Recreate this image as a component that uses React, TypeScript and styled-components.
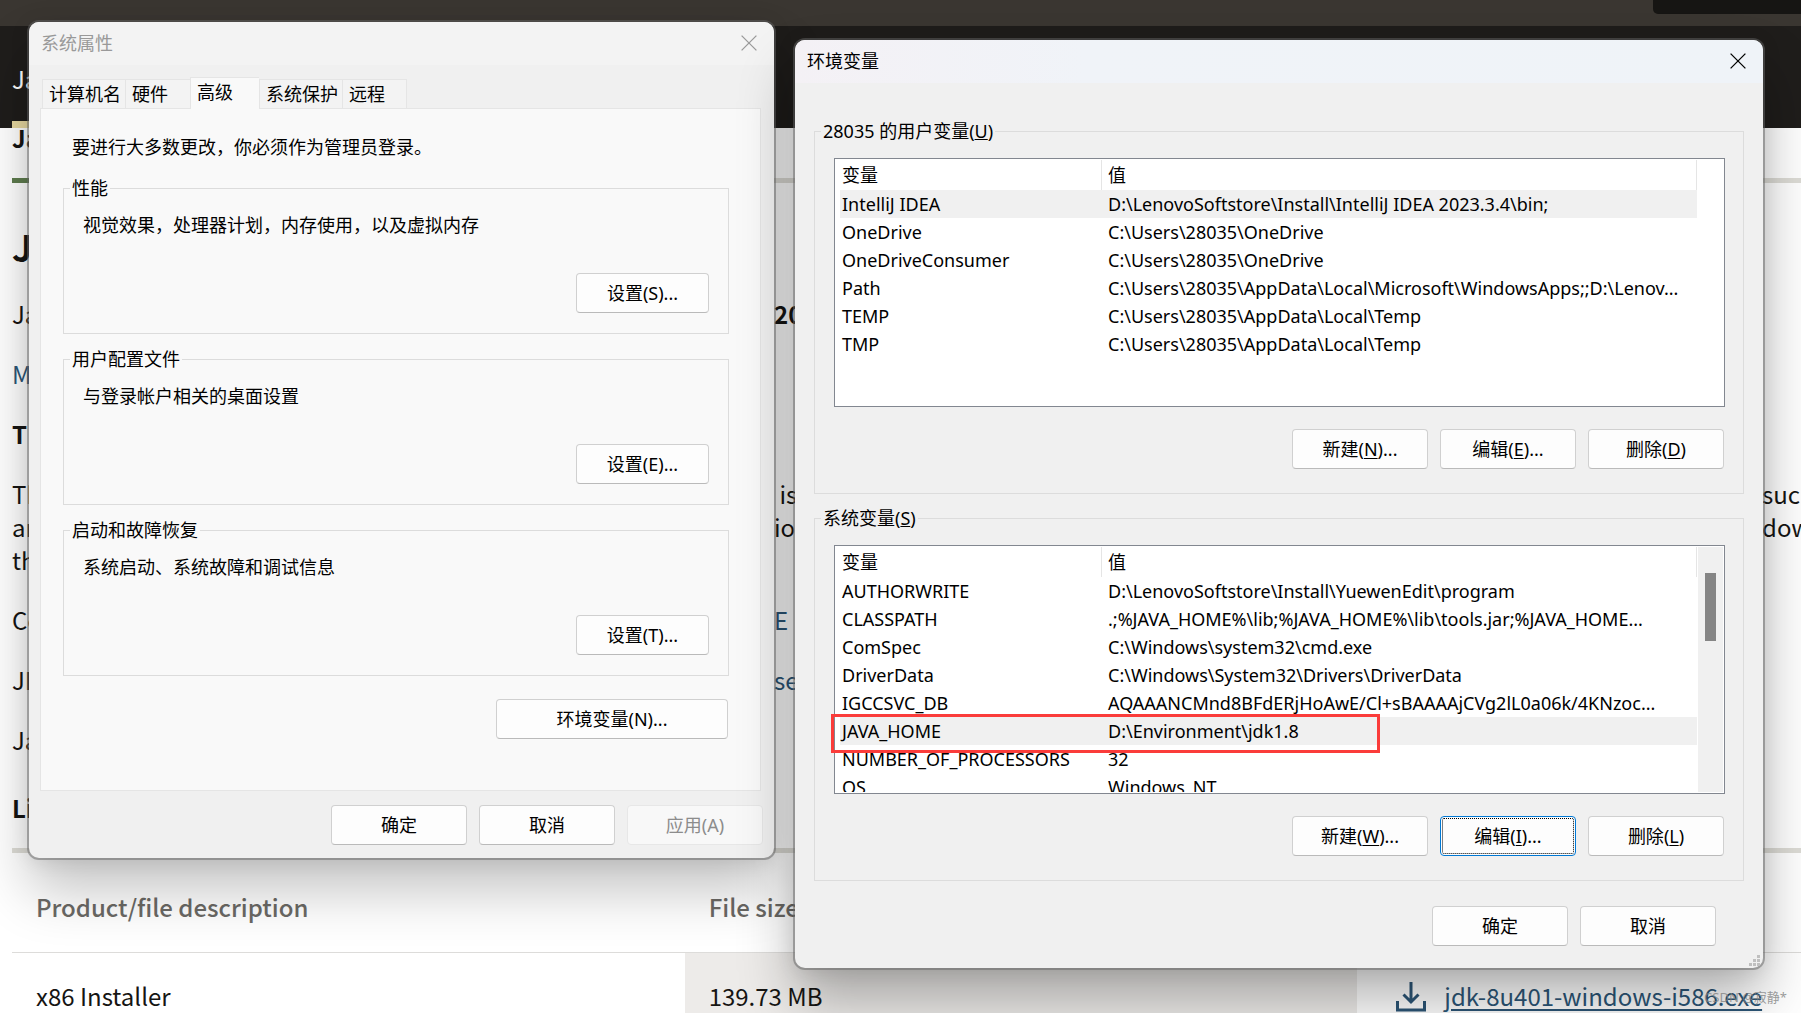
import React from "react";
import styled, { createGlobalStyle, css } from "styled-components";

const uiFont = `"Noto Sans", "Noto Sans CJK SC", sans-serif`;
const pageFont = `"Noto Sans CJK SC", sans-serif`;

const GlobalStyle = createGlobalStyle`
  *, *::before, *::after { box-sizing: border-box; }
  body { margin: 0; background: #fff; }
  h1, h2, p { margin: 0; font-weight: inherit; font-size: inherit; }
  button { font: inherit; color: inherit; }
`;

const Desktop = styled.div`
  position: relative;
  height: 100vh;
  overflow: hidden;
  font-family: ${uiFont};
  font-size: 18px;
  line-height: 24px;
  color: #000;
`;

/* ---------- Web page behind the dialogs ---------- */

const WebPage = styled.main`
  font-family: ${pageFont};
  font-size: 24px;
  line-height: 33px;
  color: #161513;
`;

const BrowserBar = styled.div`
  display: flex;
  justify-content: flex-end;
  height: 26px;
  background: #3a3631;
`;

const BrowserChip = styled.div`
  width: 148px;
  height: 14px;
  border-bottom-left-radius: 5px;
  background: #161513;
`;

const SiteHeader = styled.header`
  display: flex;
  flex-direction: column;
  justify-content: space-between;
  height: 102px;
  padding: 36px 0 0 12px;
  background: #1f1d1b;
  color: #fff;
`;

const HeaderMark = styled.div`
  width: 160px;
  height: 7px;
  background: #e8d9a1;
`;

const PageBody = styled.div`
  padding-left: 12px;
`;

const PageTab = styled.div`
  height: 50px;
  line-height: 20px;
  font-weight: 700;
`;

const Rule = styled.div`
  height: 5px;
  background: #dddcd6;
`;

const RuleActive = styled.div`
  width: 160px;
  height: 5px;
  background: #5f7d4f;
`;

const PageTitle = styled.h1`
  padding: 39px 0 27px;
  font-size: 36px;
  line-height: 48px;
  font-weight: 700;
`;

const Line = styled.div<{ $bold?: boolean; $tight?: boolean; $link?: boolean }>`
  display: grid;
  grid-template-columns: 762fr 988fr 39fr;
  margin-bottom: ${(p) => (p.$tight ? 0 : 27)}px;
  white-space: pre;
  font-weight: ${(p) => (p.$bold ? 700 : 400)};
  color: ${(p) => (p.$link ? "#2c5677" : "inherit")};
`;

const Piece = styled.span<{ $bold?: boolean; $link?: boolean }>`
  min-width: 0;
  overflow: hidden;
  ${(p) => p.$bold && "font-weight: 700;"}
  ${(p) => p.$link && "color: #2c5677;"}
`;

const LicenseLine = styled.div`
  padding: 8px 0 24px;
  font-weight: 700;
`;

const Downloads = styled.table`
  width: 100%;
  table-layout: fixed;
  border-collapse: collapse;

  th {
    height: 99px;
    padding: 9px 24px 0;
    text-align: left;
    font-weight: 500;
    color: #6b6965;
    border-bottom: 1px solid #dddcda;
  }

  td {
    height: 100px;
    padding: 26px 24px 0;
    vertical-align: top;
  }

  td:nth-child(2) {
    background: #edebe9;
  }

  td:nth-child(3) {
    padding-left: 39px;
  }
`;

const WideCol = styled.col`
  width: 37.6%;
`;

const DownloadLink = styled.a`
  display: flex;
  align-items: flex-end;
  gap: 18px;
  color: #2c5677;
  white-space: nowrap;
  text-decoration: underline;
  text-decoration-thickness: 2px;
  text-underline-offset: 3px;

  svg {
    flex: none;
  }
`;

const Watermark = styled.div`
  position: absolute;
  right: 14px;
  bottom: 4px;
  font-size: 13px;
  color: rgba(130, 130, 130, 0.8);
`;

/* ---------- Dialog windows ---------- */

const Dialog = styled.section<{ $left: number; $top: number; $width: number; $inactive?: boolean }>`
  position: absolute;
  left: ${(p) => p.$left}px;
  top: ${(p) => p.$top}px;
  width: ${(p) => p.$width}px;
  border-radius: 10px;
  background: #f0f0f0;
  box-shadow:
    0 0 0 2px rgba(100, 100, 100, 0.5),
    0 2px 20px rgba(0, 0, 0, 0.1),
    0 32px 56px rgba(0, 0, 0, ${(p) => (p.$inactive ? 0.24 : 0.3)});
`;

const TitleBar = styled.header<{ $inactive?: boolean }>`
  display: flex;
  align-items: center;
  justify-content: space-between;
  height: 43px;
  padding: 0 12px 2px;
  border-radius: 10px 10px 0 0;
  background: ${(p) => (p.$inactive ? "#f3f3f3" : "linear-gradient(90deg, #f4f1f5, #f0f3f8 30%, #eff3f8)")};
  color: ${(p) => (p.$inactive ? "#999" : "#000")};
`;

const CloseButton = styled.button`
  display: flex;
  padding: 5px;
  border: 0;
  background: none;
`;

const Content = styled.div<{ $pad: string }>`
  display: flex;
  flex-direction: column;
  padding: ${(p) => p.$pad};
`;

const Tabs = styled.div`
  display: flex;
  align-items: flex-end;
  height: 31px;
  padding-left: 2px;
`;

const Tab = styled.button<{ $active?: boolean }>`
  min-width: 65px;
  height: 29px;
  padding: 0 4px 0 6px;
  border: 1px solid #e5e5e5;
  border-width: 1px 0 0 1px;
  background: #f3f3f3;
  text-align: left;
  white-space: nowrap;

  &:last-child {
    border-right-width: 1px;
  }

  ${(p) =>
    p.$active &&
    css`
      position: relative;
      min-width: 69px;
      height: 32px;
      margin-bottom: -1px;
      padding-bottom: 3px;
      background: #f9f9f9;
    `}
`;

const Panel = styled.div`
  display: flex;
  flex-direction: column;
  gap: 13px;
  margin-right: 2px;
  padding: 26px 31px 51px 22px;
  border: 1px solid #e5e5e5;
  background: #f9f9f9;
`;

const Notice = styled.p`
  padding: 0 9px 4px;
`;

const Group = styled.fieldset`
  min-width: 0;
  margin: 0;
  padding: 0 6px;
  border: 1px solid #dcdcdc;

  legend {
    padding: 0 2px;
  }
`;

const GroupBody = styled.div<{ $list?: boolean }>`
  display: flex;
  flex-direction: column;
  gap: ${(p) => (p.$list ? 22 : 36)}px;
  padding: ${(p) => (p.$list ? "15px 12px 24px 13px" : "13px 13px 20px")};
`;

const Buttons = styled.div<{ $pad?: string }>`
  display: flex;
  justify-content: flex-end;
  gap: 12px;
  padding: ${(p) => p.$pad ?? "0"};
`;

const Button = styled.button<{ $width?: number; $focused?: boolean }>`
  width: ${(p) => p.$width ?? 136}px;
  height: 40px;
  padding: 0;
  border: 1px solid #d0d0d0;
  border-bottom-color: #bababa;
  border-radius: 4px;
  background: #fdfdfd;

  u {
    text-underline-offset: 2px;
    text-decoration-thickness: 1px;
  }

  &:disabled {
    border-color: #e7e7e7;
    background: #f8f8f8;
    color: #8c8c8c;
  }

  ${(p) =>
    p.$focused &&
    css`
      border-color: #0078d4;
      outline: 1px dotted #000;
      outline-offset: -3px;
    `}
`;

const ListBox = styled.div`
  position: relative;
  display: flex;
  height: 249px;
  padding: 1px 1px 1px 5px;
  border: 1px solid #828790;
  background: #fff;
`;

const ListView = styled.div`
  flex: 1;
  min-width: 0;
  overflow: hidden;
`;

const VarTable = styled.table`
  width: 100%;
  table-layout: fixed;
  border-collapse: separate;
  border-spacing: 0;

  th,
  td {
    height: 28px;
    padding: 0 0 0 2px;
    text-align: left;
    font-weight: 400;
    white-space: nowrap;
    overflow: hidden;
  }

  th {
    height: 30px;
    border-right: 1px solid #e5e5e5;
  }

  th + th,
  td + td {
    padding-left: 6px;
  }
`;

const NameCol = styled.col`
  width: 262px;
`;

const VarRow = styled.tr<{ $selected?: boolean }>`
  background: ${(p) => (p.$selected ? "#f0f0f0" : "transparent")};
`;

const ScrollTrack = styled.div<{ $visible?: boolean }>`
  width: 25px;
  margin-left: 1px;
  padding: 26px 7px 0;
  background: ${(p) => (p.$visible ? "#f0f0f0" : "transparent")};
`;

const ScrollThumb = styled.div`
  height: 68px;
  background: #858585;
`;

const Highlight = styled.div`
  position: absolute;
  left: -4px;
  top: 168px;
  width: 549px;
  height: 39px;
  border: 3px solid #fb3c3a;
`;

const Grip = styled.svg`
  position: absolute;
  right: 3px;
  bottom: 2px;
`;

const CloseIcon = () => (
  <svg width="16" height="16" viewBox="0 0 16 16" fill="none" stroke="currentColor" strokeWidth="1.3" aria-hidden="true">
    <path d="M.6.6l14.8 14.8M15.4.6L.6 15.4" />
  </svg>
);

const DownloadIcon = () => (
  <svg width="30" height="31" viewBox="0 0 30 31" fill="none" stroke="#2c5677" strokeWidth="3" aria-hidden="true">
    <path d="M15 1v20M7.500 13.500L15 21l7.500-7.500M1.500 20v9h27v-9" />
  </svg>
);

const settings = [
  { title: "性能", text: "视觉效果，处理器计划，内存使用，以及虚拟内存", button: "设置(S)..." },
  { title: "用户配置文件", text: "与登录帐户相关的桌面设置", button: "设置(E)..." },
  { title: "启动和故障恢复", text: "系统启动、系统故障和调试信息", button: "设置(T)..." },
];

type Variable = [name: string, value: string];

const userVars: Variable[] = [
  ["IntelliJ IDEA", "D:\\LenovoSoftstore\\Install\\IntelliJ IDEA 2023.3.4\\bin;"],
  ["OneDrive", "C:\\Users\\28035\\OneDrive"],
  ["OneDriveConsumer", "C:\\Users\\28035\\OneDrive"],
  ["Path", "C:\\Users\\28035\\AppData\\Local\\Microsoft\\WindowsApps;;D:\\Lenov..."],
  ["TEMP", "C:\\Users\\28035\\AppData\\Local\\Temp"],
  ["TMP", "C:\\Users\\28035\\AppData\\Local\\Temp"],
];

const systemVars: Variable[] = [
  ["AUTHORWRITE", "D:\\LenovoSoftstore\\Install\\YuewenEdit\\program"],
  ["CLASSPATH", ".;%JAVA_HOME%\\lib;%JAVA_HOME%\\lib\\tools.jar;%JAVA_HOME..."],
  ["ComSpec", "C:\\Windows\\system32\\cmd.exe"],
  ["DriverData", "C:\\Windows\\System32\\Drivers\\DriverData"],
  ["IGCCSVC_DB", "AQAAANCMnd8BFdERjHoAwE/Cl+sBAAAAjCVg2lL0a06k/4KNzoc..."],
  ["JAVA_HOME", "D:\\Environment\\jdk1.8"],
  ["NUMBER_OF_PROCESSORS", "32"],
  ["OS", "Windows_NT"],
];

const KeyLabel = ({ text, accessKey, more }: { text: string; accessKey: string; more?: boolean }) => (
  <>
    {text}(<u>{accessKey}</u>){more && "..."}
  </>
);

function VariableList({ rows, selected, scroll, children }: {
  rows: Variable[];
  selected: string;
  scroll?: boolean;
  children?: React.ReactNode;
}) {
  return (
    <ListBox>
      <ListView>
        <VarTable>
          <colgroup>
            <NameCol />
            <col />
          </colgroup>
          <thead>
            <tr>
              <th>变量</th>
              <th>值</th>
            </tr>
          </thead>
          <tbody>
            {rows.map(([name, value]) => (
              <VarRow key={name} $selected={name === selected}>
                <td>{name}</td>
                <td>{value}</td>
              </VarRow>
            ))}
          </tbody>
        </VarTable>
      </ListView>
      <ScrollTrack $visible={scroll}>{scroll && <ScrollThumb />}</ScrollTrack>
      {children}
    </ListBox>
  );
}

function DownloadPage() {
  return (
    <WebPage>
      <BrowserBar>
        <BrowserChip />
      </BrowserBar>
      <SiteHeader>
        Ja
        <HeaderMark />
      </SiteHeader>
      <PageBody>
        <PageTab>Ja</PageTab>
        <Rule>
          <RuleActive />
        </Rule>
        <PageTitle>J</PageTitle>
        <Line>
          <Piece>Ja</Piece>
          <Piece $bold>20</Piece>
        </Line>
        <Line $link>M</Line>
        <Line $bold>T</Line>
        <Line $tight>
          <Piece>Th</Piece>
          <Piece> is</Piece>
          <Piece>suc</Piece>
        </Line>
        <Line $tight>
          <Piece>an</Piece>
          <Piece>ion</Piece>
          <Piece>dow</Piece>
        </Line>
        <Line>th</Line>
        <Line>
          <Piece>Co</Piece>
          <Piece $link>E</Piece>
        </Line>
        <Line>
          <Piece>JD</Piece>
          <Piece $link>se</Piece>
        </Line>
        <Line>Ja</Line>
        <LicenseLine>Li</LicenseLine>
        <Rule />
        <Downloads>
          <colgroup>
            <WideCol />
            <WideCol />
            <col />
          </colgroup>
          <thead>
            <tr>
              <th>Product/file description</th>
              <th>File size</th>
              <th />
            </tr>
          </thead>
          <tbody>
            <tr>
              <td>x86 Installer</td>
              <td>139.73 MB</td>
              <td>
                <DownloadLink href="#">
                  <DownloadIcon />
                  jdk-8u401-windows-i586.exe
                </DownloadLink>
              </td>
            </tr>
          </tbody>
        </Downloads>
      </PageBody>
    </WebPage>
  );
}

function SystemProperties() {
  return (
    <Dialog $left={29} $top={22} $width={745} $inactive>
      <TitleBar $inactive>
        <h2>系统属性</h2>
        <CloseButton aria-label="关闭">
          <CloseIcon />
        </CloseButton>
      </TitleBar>
      <Content $pad="12px 11px 13px">
        <Tabs role="tablist">
          <Tab role="tab">计算机名</Tab>
          <Tab role="tab">硬件</Tab>
          <Tab role="tab" aria-selected $active>
            高级
          </Tab>
          <Tab role="tab">系统保护</Tab>
          <Tab role="tab">远程</Tab>
        </Tabs>
        <Panel>
          <Notice>要进行大多数更改，你必须作为管理员登录。</Notice>
          {settings.map((s) => (
            <Group key={s.title}>
              <legend>{s.title}</legend>
              <GroupBody>
                <p>{s.text}</p>
                <Buttons>
                  <Button $width={133}>{s.button}</Button>
                </Buttons>
              </GroupBody>
            </Group>
          ))}
          <Buttons $pad="10px 1px 0 0">
            <Button $width={232}>环境变量(N)...</Button>
          </Buttons>
        </Panel>
        <Buttons $pad="14px 0 0">
          <Button>确定</Button>
          <Button>取消</Button>
          <Button disabled>应用(A)</Button>
        </Buttons>
      </Content>
    </Dialog>
  );
}

function EnvironmentVariables() {
  return (
    <Dialog $left={795} $top={40} $width={968}>
      <TitleBar>
        <h2>环境变量</h2>
        <CloseButton aria-label="关闭">
          <CloseIcon />
        </CloseButton>
      </TitleBar>
      <Content $pad="36px 19px 22px">
        <Group>
          <legend>
            <KeyLabel text="28035 的用户变量" accessKey="U" />
          </legend>
          <GroupBody $list>
            <VariableList rows={userVars} selected="IntelliJ IDEA" />
            <Buttons $pad="0 1px 0 0">
              <Button>
                <KeyLabel text="新建" accessKey="N" more />
              </Button>
              <Button>
                <KeyLabel text="编辑" accessKey="E" more />
              </Button>
              <Button>
                <KeyLabel text="删除" accessKey="D" />
              </Button>
            </Buttons>
          </GroupBody>
        </Group>
        <Content $pad="12px 0 0">
          <Group>
            <legend>
              <KeyLabel text="系统变量" accessKey="S" />
            </legend>
            <GroupBody $list>
              <VariableList rows={systemVars} selected="JAVA_HOME" scroll>
                <Highlight />
              </VariableList>
              <Buttons $pad="0 1px 0 0">
                <Button>
                  <KeyLabel text="新建" accessKey="W" more />
                </Button>
                <Button $focused>
                  <KeyLabel text="编辑" accessKey="I" more />
                </Button>
                <Button>
                  <KeyLabel text="删除" accessKey="L" />
                </Button>
              </Buttons>
            </GroupBody>
          </Group>
        </Content>
        <Buttons $pad="25px 28px 0 0">
          <Button>确定</Button>
          <Button>取消</Button>
        </Buttons>
      </Content>
      <Grip width="11" height="11" viewBox="0 0 11 11" fill="#bfbfbf" aria-hidden="true">
        <path d="M8 0h3v3H8zM4 4h3v3H4zM8 4h3v3H8zM0 8h3v3H0zM4 8h3v3H4zM8 8h3v3H8z" />
      </Grip>
    </Dialog>
  );
}

export default function App() {
  return (
    <Desktop>
      <GlobalStyle />
      <DownloadPage />
      <SystemProperties />
      <EnvironmentVariables />
      <Watermark>CSDN @寂静*</Watermark>
    </Desktop>
  );
}
